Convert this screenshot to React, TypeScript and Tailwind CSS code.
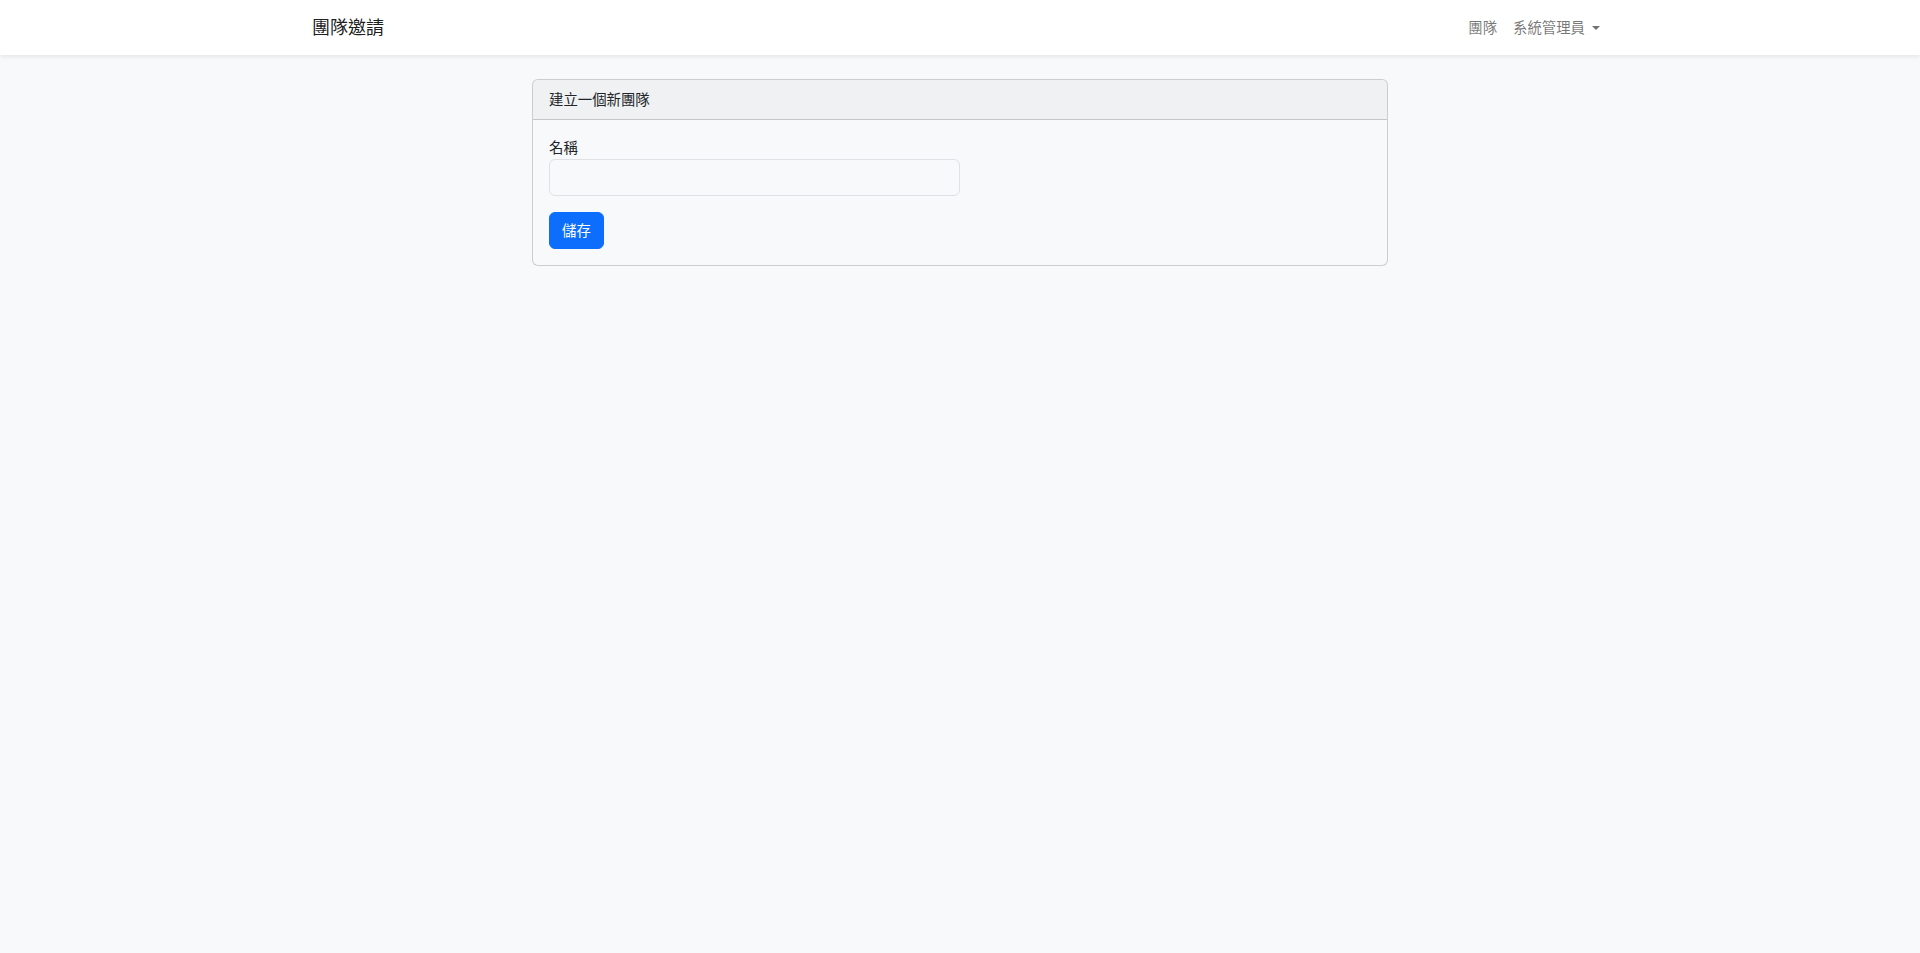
import React from 'react';

const font = { fontFamily: '"Noto Sans", "Noto Sans CJK TC", sans-serif' };

// --- Navbar ---
const Navbar: React.FC = () => (
    <nav className="bg-white shadow-[0_2px_4px_rgba(0,0,0,0.075)] py-2">
        <div className="max-w-[1320px] mx-auto px-3 flex items-center justify-between">
            <a className="py-[5px] text-[18px] leading-[27px] text-black/90 mr-4">團隊邀請</a>
            <ul className="flex items-center text-[14.4px] leading-[23.04px] text-black/55">
                <li><a className="block px-2 py-2">團隊</a></li>
                <li>
                    <a className="flex items-center px-2 py-2">
                        系統管理員
                        <span className="ml-[7px] inline-block w-0 h-0 border-l-[4.3px] border-r-[4.3px] border-t-[4.3px] border-l-transparent border-r-transparent border-t-current" />
                    </a>
                </li>
            </ul>
        </div>
    </nav>
);

// --- CreateTeamCard ---
const CreateTeamCard: React.FC = () => (
    <div className="border border-black/[0.175] rounded-md bg-[#f8f9fa] text-[14.4px] leading-[23.04px] text-[#212529]">
        <div className="px-4 py-2 bg-black/[0.03] border-b border-black/[0.175] rounded-t-md">建立一個新團隊</div>
        <div className="p-4">
            <div className="w-1/2 mb-4">
                <label className="block">名稱</label>
                <input type="text" className="block w-full h-[37px] px-3 py-1.5 bg-[#f8f9fa] border border-[#dee2e6] rounded-md outline-none" />
            </div>
            <button className="bg-[#0d6efd] text-white rounded-md px-3 py-1.5 border border-[#0d6efd]">儲存</button>
        </div>
    </div>
);

const App: React.FC = () => (
    <div className="min-h-screen bg-[#f8f9fa]" style={font}>
        <Navbar />
        <div className="max-w-[1320px] mx-auto px-3 py-6">
            <div className="-mx-3 flex justify-center">
                <div className="w-2/3 px-3">
                    <CreateTeamCard />
                </div>
            </div>
        </div>
    </div>
);

export default App;
